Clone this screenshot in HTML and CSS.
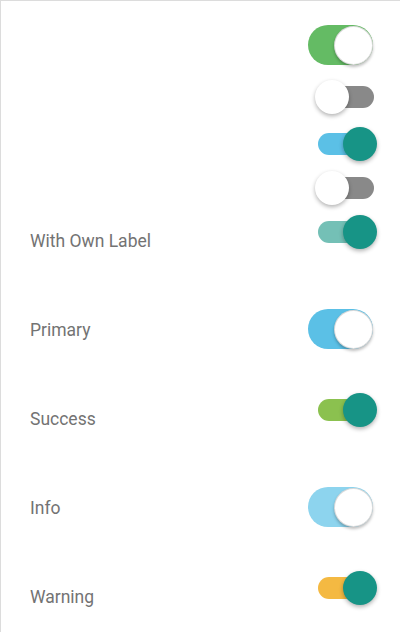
FILE: index.html
```html
<!DOCTYPE html>
<html>
<head>
<meta charset="utf-8">
<link rel="stylesheet" href="styles.css">
</head>
<body>
<div class="page">
  <div class="row r1"><span class="lg green on"><i></i></span></div>
  <div class="row r2"><span class="sm gray"><i></i></span></div>
  <div class="row r3"><span class="sm blue on"><i class="teal"></i></span></div>
  <div class="row r4"><span class="sm gray"><i></i></span></div>
  <div class="row labeled"><span class="label">With Own Label</span><span class="sm tealtrack on up"><i class="teal"></i></span></div>
  <div class="row labeled"><span class="label">Primary</span><span class="lg primary on lup"><i></i></span></div>
  <div class="row labeled"><span class="label">Success</span><span class="sm success on up"><i class="teal"></i></span></div>
  <div class="row labeled"><span class="label">Info</span><span class="lg info on lup"><i></i></span></div>
  <div class="row labeled"><span class="label">Warning</span><span class="sm warning on up"><i class="teal"></i></span></div>
</div>
</body>
</html>
```
FILE: styles.css
```css
html, body { margin: 0; padding: 0; background: #fff; }
.page {
  width: 400px;
  height: 632px;
  box-sizing: border-box;
  border-top: 1px solid #dcdcdc;
  border-left: 1px solid #dcdcdc;
  padding: 23px 27px 0 29px;
  font-family: Roboto, "Liberation Sans", sans-serif;
  overflow: hidden;
}
.row { display: flex; align-items: center; justify-content: flex-end; }
.r1 { height: 41px; }
.r2 { height: 34px; margin-top: 15px; }
.r3 { height: 34px; margin-top: 13px; }
.r4 { height: 34px; margin-top: 10px; }
.labeled { height: 89px; justify-content: space-between; }
.r4 + .labeled { margin-top: -8px; }
.label { font-size: 17.5px; color: #737373; margin-top: -2px; }

.lg {
  position: relative;
  width: 65px; height: 40px;
  border-radius: 20px;
  box-sizing: border-box;
}
.lg i {
  position: absolute;
  top: 1px; right: 0;
  width: 39px; height: 39px;
  border-radius: 50%;
  background: #fff;
  box-sizing: border-box;
  border: 1px solid rgba(0,0,0,.14);
  box-shadow: 0 2px 3px rgba(0,0,0,.25);
}
.lup { margin-top: -4px; }

.sm {
  position: relative;
  width: 56px; height: 22px;
  border-radius: 11px;
  margin-right: -1px;
}
.sm i {
  position: absolute;
  top: -6px; left: -3px;
  width: 34px; height: 34px;
  border-radius: 50%;
  background: #fff;
  box-shadow: 0 2px 4px rgba(0,0,0,.3);
}
.sm.on i { left: auto; right: -3px; }
.sm i.teal { background: #179486; }
.up { margin-top: -19px; }

.green { background: #64bb64; }
.gray { background: #898989; }
.blue { background: #5bc0e6; }
.tealtrack { background: #74c0b6; }
.primary { background: #5bc0e6; }
.success { background: #8bc14f; }
.info { background: #8dd4ee; }
.warning { background: #f4b942; }
```
